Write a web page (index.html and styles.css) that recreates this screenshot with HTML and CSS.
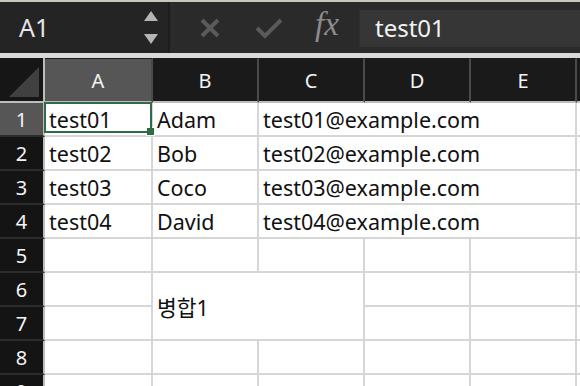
FILE: index.html
```html
<!DOCTYPE html>
<html lang="ko">
<head>
    <meta charset="UTF-8">
    <title>Sheet</title>
    <link rel="stylesheet" href="styles.css">
</head>
<body>
    <div class="window">
        <div class="formula-bar">
            <div class="name-box">
                <span class="cell-ref">A1</span>
                <span class="spinner">
                    <svg width="14" height="34" viewBox="0 0 14 34">
                        <polygon points="7,0 14,10 0,10" fill="#b4b4b4"/>
                        <polygon points="0,23 14,23 7,33" fill="#b4b4b4"/>
                    </svg>
                </span>
            </div>
            <div class="actions">
                <svg class="btn-cancel" width="22" height="22" viewBox="0 0 22 22">
                    <path d="M3 3 L19 19 M19 3 L3 19" stroke="#5a5a5a" stroke-width="4"/>
                </svg>
                <svg class="btn-enter" width="28" height="22" viewBox="0 0 28 22">
                    <path d="M2 11 L10 19 L26 3" stroke="#5a5a5a" stroke-width="4" fill="none"/>
                </svg>
                <span class="fx">fx</span>
            </div>
            <div class="formula-input">test01</div>
        </div>

        <div class="sheet">
            <div class="corner"><span class="corner-mark"></span></div>
            <div class="col-head active">A</div>
            <div class="col-head">B</div>
            <div class="col-head">C</div>
            <div class="col-head">D</div>
            <div class="col-head">E</div>
            <div class="col-head"></div>

            <!-- long e-mail text runs over D and E, hiding their grid lines -->
            <div class="row-head active">1</div>
            <div class="cell selected">test01<span class="fill-handle"></span></div>
            <div class="cell">Adam</div>
            <div class="cell overflow">test01@example.com</div>
            <div class="cell"></div>

            <div class="row-head">2</div>
            <div class="cell">test02</div>
            <div class="cell">Bob</div>
            <div class="cell overflow">test02@example.com</div>
            <div class="cell"></div>

            <div class="row-head">3</div>
            <div class="cell">test03</div>
            <div class="cell">Coco</div>
            <div class="cell overflow">test03@example.com</div>
            <div class="cell"></div>

            <div class="row-head">4</div>
            <div class="cell">test04</div>
            <div class="cell">David</div>
            <div class="cell overflow">test04@example.com</div>
            <div class="cell"></div>

            <div class="row-head">5</div>
            <div class="cell"></div>
            <div class="cell"></div>
            <div class="cell"></div>
            <div class="cell"></div>
            <div class="cell"></div>
            <div class="cell"></div>

            <div class="row-head">6</div>
            <div class="cell"></div>
            <div class="cell merged">병합1</div>
            <div class="cell"></div>
            <div class="cell"></div>
            <div class="cell"></div>

            <div class="row-head">7</div>
            <div class="cell"></div>
            <div class="cell"></div>
            <div class="cell"></div>
            <div class="cell"></div>

            <div class="row-head">8</div>
            <div class="cell"></div>
            <div class="cell"></div>
            <div class="cell"></div>
            <div class="cell"></div>
            <div class="cell"></div>
            <div class="cell"></div>

            <div class="row-head">9</div>
            <div class="cell"></div>
            <div class="cell"></div>
            <div class="cell"></div>
            <div class="cell"></div>
            <div class="cell"></div>
            <div class="cell"></div>
        </div>
    </div>
</body>
</html>
```

FILE: styles.css
```css
body {
    margin: 0;
    overflow: hidden;
    background: #ffffff;
    font-family: "Noto Sans", "Noto Sans CJK KR", sans-serif;
}

.window {
    width: 580px;
    height: 386px;
    overflow: hidden;
    border-top: 2px solid #cbc7bf;
    box-sizing: border-box;
}

/* formula bar */
.formula-bar {
    display: flex;
    height: 51px;
    background: #2a2a2a;
    border-bottom: 5px solid #d9d9d9;
}

.name-box {
    display: flex;
    align-items: center;
    justify-content: space-between;
    width: 170px;
    padding: 0 10px 0 19px;
    box-sizing: border-box;
    background: #242424;
    border-right: 2px solid #1d1d1d;
}

.cell-ref {
    color: #e6e6e6;
    font-size: 25px;
    margin-top: -2px;
}

.spinner {
    display: flex;
    margin-top: 1px;
}

.actions {
    display: flex;
    align-items: center;
    width: 189px;
    padding-left: 29px;
    box-sizing: border-box;
}

.btn-cancel {
    margin-right: 34px;
}

.btn-enter {
    margin-right: 32px;
}

.fx {
    font-family: "Liberation Serif", serif;
    font-style: italic;
    font-size: 33px;
    color: #8c8c8c;
    margin-top: -6px;
}

.formula-input {
    flex: 1;
    margin: 8px 0 6px 0;
    padding-left: 15px;
    background: #363636;
    color: #f2f2f2;
    font-size: 24px;
    line-height: 36px;
    border-left: 1px solid #2f2f2f;
}

/* grid */
.sheet {
    display: grid;
    grid-template-columns: 45px 108px 106px 106px 106px 106px 1fr;
    grid-template-rows: 45px repeat(9, 34px);
    color: #111111;
    font-size: 21.5px;
}

.corner {
    position: relative;
    background: #161616;
    border-right: 2px solid #bdbdbd;
    border-bottom: 2px solid #bdbdbd;
}

.corner-mark {
    position: absolute;
    right: 4px;
    bottom: 4px;
    width: 0;
    height: 0;
    border-left: 30px solid transparent;
    border-bottom: 30px solid #404040;
}

.col-head {
    display: flex;
    align-items: center;
    justify-content: center;
    background: #1a1a1a;
    color: #f4f4f4;
    font-size: 20px;
    border-right: 2px solid #4a4a4a;
    border-bottom: 2px solid #bdbdbd;
    border-top: 1px solid #1a1a1a;
}

.col-head.active {
    background: #565656;
}

.row-head {
    display: flex;
    align-items: center;
    justify-content: center;
    background: #141414;
    color: #f4f4f4;
    font-size: 20px;
    border-right: 2px solid #bdbdbd;
    border-bottom: 2px solid #2c2c2c;
}

.row-head.active {
    background: #565656;
}

.cell {
    display: flex;
    align-items: center;
    padding-left: 4px;
    white-space: nowrap;
    border-right: 2px solid #d6d6d6;
    border-bottom: 2px solid #d6d6d6;
    min-width: 0;
}

.overflow {
    grid-column: span 3;
}

.merged {
    grid-column: span 2;
    grid-row: span 2;
}

.selected {
    position: relative;
    z-index: 1;
}

.selected::after {
    content: "";
    position: absolute;
    left: -1px;
    top: -1px;
    right: -1px;
    bottom: 2px;
    border: 2px solid #2f6b43;
}

.fill-handle {
    position: absolute;
    right: -4px;
    bottom: -1px;
    width: 7px;
    height: 7px;
    background: #2f6b43;
    border: 1px solid #ffffff;
}
```
